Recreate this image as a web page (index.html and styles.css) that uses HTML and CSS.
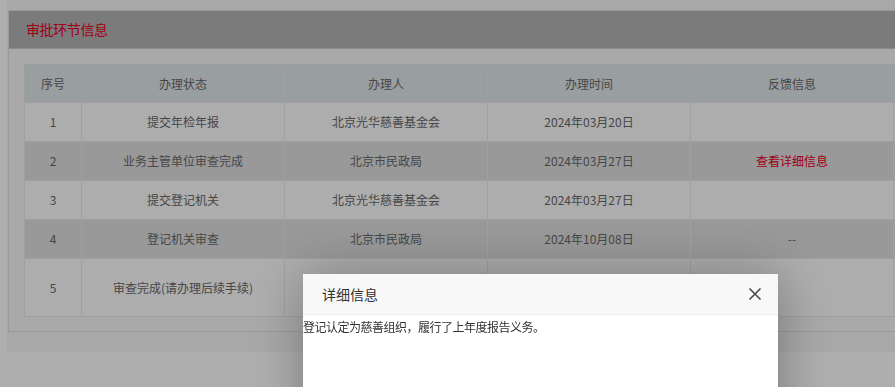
FILE: index.html
```html
<!DOCTYPE html>
<html lang="zh-CN">
<head>
<meta charset="utf-8">
<title>审批环节信息</title>
<link rel="stylesheet" href="styles.css">
</head>
<body>
<div class="page">
  <div class="panel">
    <div class="panel-head">审批环节信息</div>
    <div class="panel-body">
      <table class="flow-table">
        <colgroup>
          <col class="c-no">
          <col class="c-wide">
          <col class="c-wide">
          <col class="c-wide">
          <col class="c-wide">
          <col class="c-wide">
        </colgroup>
        <thead>
          <tr><th>序号</th><th>办理状态</th><th>办理人</th><th>办理时间</th><th>反馈信息</th><th></th></tr>
        </thead>
        <tbody>
          <tr><td>1</td><td>提交年检年报</td><td>北京光华慈善基金会</td><td>2024年03月20日</td><td></td><td></td></tr>
          <tr class="alt"><td>2</td><td>业务主管单位审查完成</td><td>北京市民政局</td><td>2024年03月27日</td><td><a class="detail-link" href="#">查看详细信息</a></td><td></td></tr>
          <tr><td>3</td><td>提交登记机关</td><td>北京光华慈善基金会</td><td>2024年03月27日</td><td></td><td></td></tr>
          <tr class="alt"><td>4</td><td>登记机关审查</td><td>北京市民政局</td><td>2024年10月08日</td><td>--</td><td></td></tr>
          <tr class="tall"><td>5</td><td>审查完成(请办理后续手续)</td><td></td><td></td><td></td><td></td></tr>
        </tbody>
      </table>
    </div>
  </div>
</div>

<div class="shade"></div>

<div class="dialog">
  <div class="dialog-title">
    <span>详细信息</span>
    <button class="dialog-close" type="button" aria-label="关闭">
      <svg width="14" height="14" viewBox="0 0 14 14"><path d="M1.5 1.5 L12.5 12.5 M12.5 1.5 L1.5 12.5" stroke="#4a4a4a" stroke-width="1.6" fill="none"/></svg>
    </button>
  </div>
  <div class="dialog-content">登记认定为慈善组织，履行了上年度报告义务。</div>
</div>
</body>
</html>
```

FILE: styles.css
```css
html, body {
  margin: 0;
  padding: 0;
  overflow: hidden;
}

body {
  background: #f9f9f9;
  font-family: "Noto Sans CJK SC", "Microsoft YaHei", sans-serif;
  font-size: 12px;
  color: #666;
  height: 387px;
}

.page {
  margin-left: 7px;
  width: 1200px;
  padding: 10px 0 20px 1px;
  background: #f1f1f1;
}

.panel {
  border: 1px solid #dcdcdc;
  background: #f2f2f2;
}

.panel-head {
  height: 37px;
  line-height: 37px;
  padding-left: 17px;
  background: #b0b0b0;
  border-bottom: 1px solid #c9c9c9;
  color: #e3001d;
  font-size: 14px;
  letter-spacing: -0.4px;
}

.panel-body {
  padding: 15px 15px 14px;
}

.flow-table {
  border-collapse: collapse;
  table-layout: fixed;
  width: 1072px;
}

.c-no { width: 57px; }
.c-wide { width: 203px; }

.flow-table th,
.flow-table td {
  border: 1px solid #e6e6e6;
  text-align: center;
  font-weight: normal;
  padding: 0;
  height: 38px;
  line-height: 20px;
}

.flow-table th {
  background: #dce2e6;
  height: 37px;
}

.flow-table td { background: #f8f8f8; }
.flow-table tr.alt td { background: #dbdbdb; }
.flow-table tr.tall td { height: 57px; }

.detail-link {
  color: #e3001d;
  text-decoration: none;
}

.shade {
  position: fixed;
  inset: 0;
  background: rgba(0, 0, 0, 0.3);
}

.dialog {
  position: fixed;
  left: 303px;
  top: 274px;
  width: 475px;
  height: 200px;
  background: #fff;
  box-shadow: 1px 1px 50px rgba(0, 0, 0, 0.3);
}

.dialog-title {
  height: 40px;
  display: flex;
  align-items: center;
  justify-content: space-between;
  padding: 0 16px 0 19px;
  background: #f8f8f8;
  border-bottom: 1px solid #eee;
  color: #333;
  font-size: 14px;
}

.dialog-close {
  border: 0;
  background: none;
  padding: 0;
  width: 14px;
  height: 14px;
  display: flex;
  cursor: pointer;
}

.dialog-content {
  padding-top: 3px;
  line-height: 18px;
  color: #333;
  font-size: 12px;
  letter-spacing: -0.5px;
}
```
